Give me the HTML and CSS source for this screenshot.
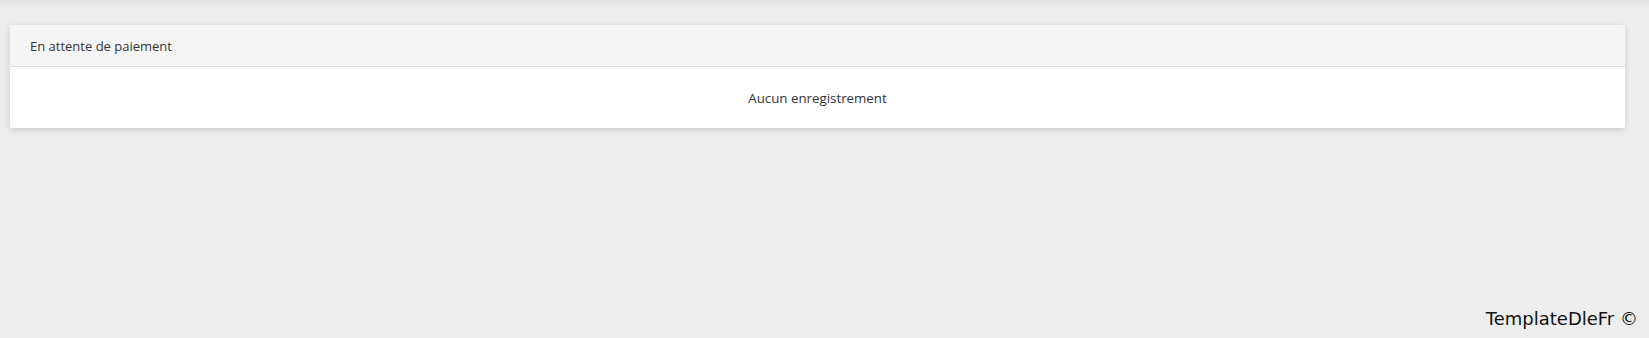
FILE: index.html
```html
<!DOCTYPE html>
<html lang="fr">
<head>
<meta charset="utf-8">
<title>En attente de paiement</title>
<link rel="stylesheet" href="styles.css">
</head>
<body>
<div class="page">
  <div class="card">
    <div class="card-header">En attente de paiement</div>
    <div class="card-body">Aucun enregistrement</div>
  </div>
  <div class="spacer"></div>
  <div class="footer">TemplateDleFr ©</div>
</div>
</body>
</html>
```
FILE: styles.css
```css
html, body {
  margin: 0;
  padding: 0;
  height: 100%;
}
body {
  background: linear-gradient(to bottom, #e2e2e2 0px, #ebebeb 6px, #ededed 12px) #ededed;
  font-family: "Open Sans", "Noto Sans", sans-serif;
  color: #333;
}
.page {
  display: flex;
  flex-direction: column;
  height: 100%;
  box-sizing: border-box;
  padding: 25px 24px 0 10px;
}
.card {
  background: #fff;
  border-radius: 2px;
  box-shadow: 0 2px 6px rgba(0,0,0,0.14);
}
.card-header {
  background: #f5f5f5;
  border-bottom: 1px solid #dcdcdc;
  height: 42px;
  box-sizing: border-box;
  padding: 0 20px;
  display: flex;
  align-items: center;
  font-size: 13px;
  color: #333;
  border-radius: 2px 2px 0 0;
}
.card-body {
  height: 61px;
  display: flex;
  align-items: center;
  justify-content: center;
  font-size: 13.3px;
  color: #333;
}
.spacer {
  flex: 1;
}
.footer {
  align-self: flex-end;
  margin-right: -13px;
  height: 30px;
  font-family: "DejaVu Sans", sans-serif;
  font-size: 18px;
  color: #111;
}
```
